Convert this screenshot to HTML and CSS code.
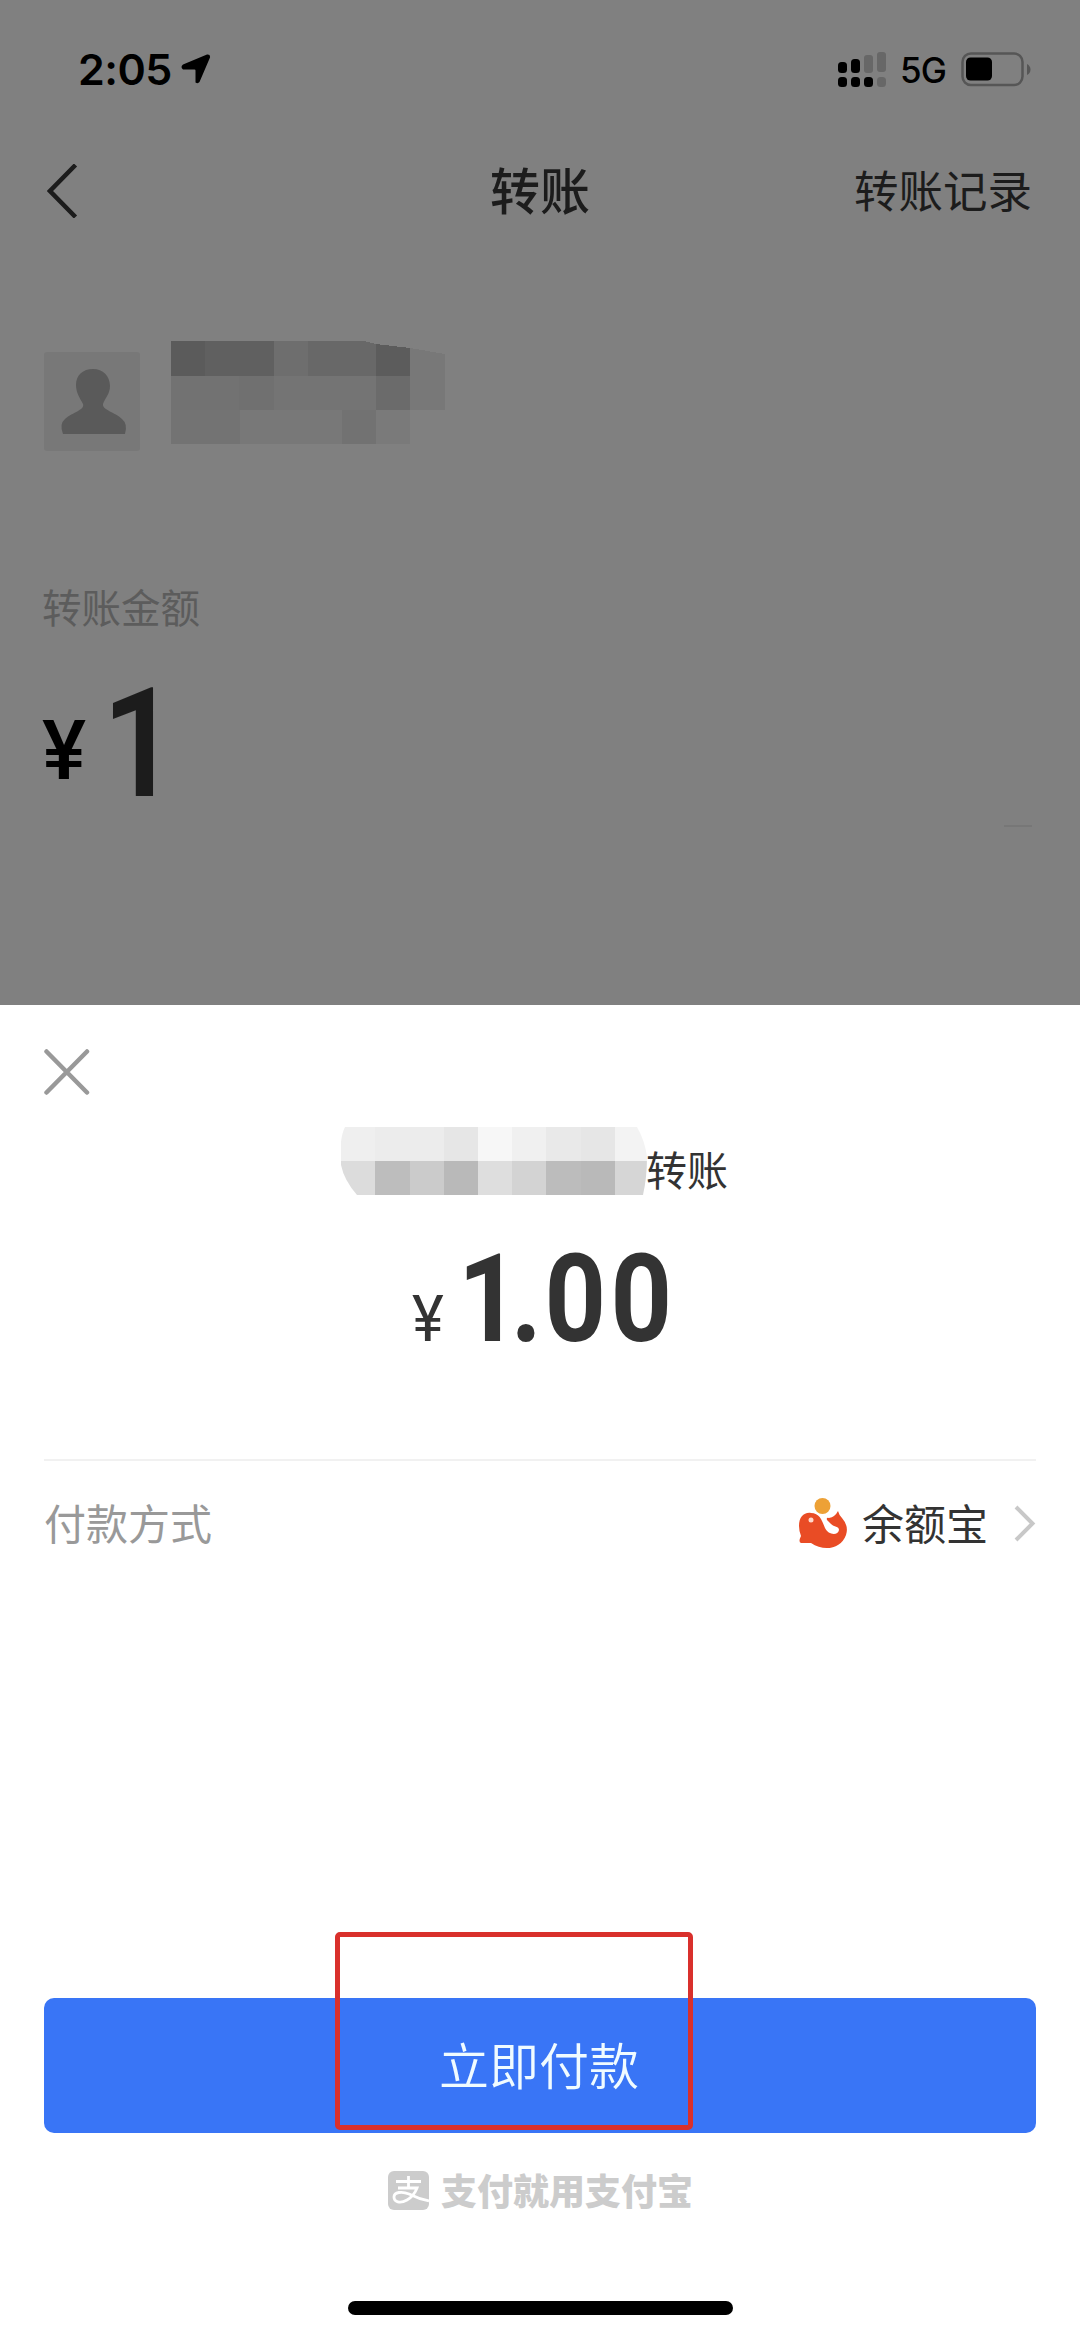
FILE: index.html
```html
<!DOCTYPE html>
<html lang="zh-CN">
<head>
<meta charset="utf-8">
<title>转账</title>
<link rel="stylesheet" href="styles.css">
</head>
<body>
<div class="screen">
  <section class="backdrop">
    <div class="status">
      <span class="time">2:05</span>
      <svg class="locate" width="30" height="30" viewBox="0 0 30 30"><path d="M2 10.500 26 .5Q29.500 0 29 3.500L18.500 28Q17 30 14.500 28.500V16.500Q14.500 15.500 13.500 15.500H2Q-1 13 2 10.500Z"/></svg>
      <svg class="signal" width="50" height="36" viewBox="0 0 50 36">
        <g><rect x="0" y="10" width="9" height="11" rx="3.500"/><rect x="13" y="7" width="9" height="14" rx="3.500"/><rect x="0" y="25" width="9" height="10" rx="3.500"/><rect x="13" y="25" width="9" height="10" rx="3.500"/><rect x="26" y="25" width="9" height="10" rx="3.500"/></g>
        <g fill="#676767"><rect x="26" y="3" width="9" height="18" rx="3"/><rect x="39" y="0" width="9" height="20" rx="3"/><rect x="39" y="25" width="9" height="10" rx="3.500"/></g>
      </svg>
      <span class="network">5G</span>
      <svg class="battery" width="70" height="35" viewBox="0 0 70 35"><rect x="1.500" y="1.500" width="60" height="31.500" rx="8.500" fill="none" stroke="#565656" stroke-width="2.500"/><rect x="5" y="5.500" width="26" height="23" rx="4.500"/><path d="M66 12Q69.500 14 69.500 17.500T66 23Z" fill="#565656"/></svg>
    </div>
    <nav class="nav">
      <svg width="31" height="54" viewBox="0 0 31 54"><path d="M28.500 1 3 27 28.500 53" fill="none" stroke="#1c1c1c" stroke-width="4.500"/></svg>
      <h1>转账</h1>
      <span class="records">转账记录</span>
    </nav>
    <div class="payee">
      <svg class="avatar" width="96" height="99" viewBox="0 0 96 99"><rect width="96" height="99" rx="3" fill="#787878"/><path d="M49 17C59 17 66 24 66 34 66 42 61 46 59 52 58 58 71 60 78 67Q84 72 81 82H19Q15 72 21 67C29 60 41 58 39 52 36 46 32 41 32 33 32 23 39 17 49 17Z" fill="#5a5a5a"/></svg>
      <svg class="mask" width="274" height="104" viewBox="0 0 274 104" shape-rendering="crispEdges">
        <path fill="#5b5b5b" d="M0 0H34V35H0Z"/><path fill="#606060" d="M34 0H103V35H34Z"/><path fill="#6e6e6e" d="M103 0H137V35H103Z"/><path fill="#686868" d="M137 0H193L205 3V35H137Z"/><path fill="#5c5c5c" d="M205 3 239 7V35H205Z"/><path fill="#787878" d="M239 7 274 13V69H239Z"/>
        <path fill="#727272" d="M0 35H68V69H0Z"/><path fill="#707070" d="M68 35H103V69H68Z"/><path fill="#747474" d="M103 35H205V69H103Z"/><path fill="#6b6b6b" d="M205 35H239V69H205Z"/>
        <path fill="#737373" d="M0 69H69V103H0Z"/><path fill="#787878" d="M69 69H171V103H69Z"/><path fill="#727272" d="M171 69H205V103H171Z"/><path fill="#7a7a7a" d="M205 69H239V103H205Z"/>
      </svg>
    </div>
    <p class="caption">转账金额</p>
    <div class="entry"><span class="entry-sign">¥</span><span class="entry-value">1</span></div>
    <i class="trace"></i>
  </section>

  <section class="sheet">
    <svg class="close" width="46" height="46" viewBox="0 0 46 46"><path d="M2.500 2.500 43 43.500M43 2.500 2.500 43.500" stroke="#999" stroke-width="4.500" stroke-linecap="round"/></svg>
    <div class="subject">
      <svg width="308" height="68" viewBox="0 0 308 68">
        <clipPath id="brush"><path d="M4 0H296Q304 14 306 30 306 50 302 68H16Q3 53 0 38V15Q1 6 4 0Z"/></clipPath>
        <g clip-path="url(#brush)" shape-rendering="crispEdges">
          <path fill="#efefef" d="M0 0H34V34H0Z"/><path fill="#ececec" d="M34 0H103V34H34Z"/><path fill="#e6e6e6" d="M103 0H137V34H103Z"/><path fill="#f7f7f7" d="M137 0H171V34H137Z"/><path fill="#f0f0f0" d="M171 0H205V34H171Z"/><path fill="#e9e9e9" d="M205 0H240V34H205Z"/><path fill="#e6e6e6" d="M240 0H274V34H240Z"/><path fill="#f3f3f3" d="M274 0H308V34H274Z"/>
          <path fill="#dcdcdc" d="M0 34H34V68H0Z"/><path fill="#bdbdbd" d="M34 34H69V68H34Z"/><path fill="#cbcbcb" d="M69 34H103V68H69Z"/><path fill="#b9b9b9" d="M103 34H137V68H103Z"/><path fill="#dedede" d="M137 34H171V68H137Z"/><path fill="#d3d3d3" d="M171 34H205V68H171Z"/><path fill="#bcbcbc" d="M205 34H240V68H205Z"/><path fill="#b9b9b9" d="M240 34H274V68H240Z"/><path fill="#d6d6d6" d="M274 34H308V68H274Z"/>
        </g>
      </svg>
      <span>转账</span>
    </div>
    <div class="total"><span class="total-sign">¥</span><span class="total-value"><span class="total-lead">1</span><span class="total-dot">.</span>00</span></div>
    <div class="method">
      <span class="method-label">付款方式</span>
      <svg class="fund" width="48" height="51" viewBox="0 0 48 51"><circle cx="23.500" cy="8" r="8" fill="#eda136"/><path d="M0 28C0 19 5 14 12 15 21 15 23 23 26 30 29 37 39 38 40 32 40 28 35 29 32 26L28 22Q27 19 30 20 36 19 39 13 40 17 43 20 50 28 47 37C42 51 25 54 12 45H2Q-1 44 2 38Q0 33 0 28Z" fill="#e94c25"/><circle cx="12" cy="22" r="2.500" fill="#ffd9cc"/></svg>
      <span class="method-name">余额宝</span>
      <svg class="more" width="22" height="37" viewBox="0 0 22 37"><path d="M2 2 18.500 18.500 2 35" fill="none" stroke="#c8c8c8" stroke-width="4"/></svg>
    </div>
    <div class="action">
      <button class="pay">立即付款</button>
      <i class="marker"></i>
    </div>
    <footer class="brand">
      <svg width="41" height="39" viewBox="0 0 41 39"><rect width="41" height="39" rx="6" fill="#ccc"/><g fill="none" stroke="#fff" stroke-width="2.800"><path d="M8 10.500H33M20.500 5V17M10 17H29Q26 25 19 29C12 33 6 31 6 26S14 20 21 23Q31 28 41 30"/></g></svg>
      <span>支付就用支付宝</span>
    </footer>
    <div class="home"></div>
  </section>
</div>
</body>
</html>
```
FILE: styles.css
```css
* { box-sizing: border-box; }
body { margin: 0; background: #fff; font-family: "Noto Sans CJK SC", sans-serif; }
svg { display: block; flex: none; }
h1, p { margin: 0; }
.screen { width: 1080px; height: 2337px; display: flex; flex-direction: column; overflow: hidden; }

.backdrop { position: relative; height: 1005px; background: #808080; color: #1c1c1c; flex: none; }
.status { display: flex; align-items: center; height: 138px; padding: 0 49px 0 78px; font-family: Inter, sans-serif; color: #000; }
.time { width: 103px; font-size: 43px; font-weight: 600; line-height: 50px; letter-spacing: -.5px; }
.signal { margin-left: auto; margin-top: 2px; }
.network { width: 61px; margin-left: 12px; margin-top: 2px; font-size: 35px; font-weight: 500; line-height: 40px; letter-spacing: -1px; }
.nav { display: grid; grid-template-columns: 1fr auto 1fr; align-items: center; height: 110px; padding: 0 48px 0 47px; margin-top: -2px; }
.nav svg { margin-bottom: 1px; }
.nav h1 { margin: 0 0 7px 1px; font-size: 50px; font-weight: 500; line-height: 60px; }
.records { justify-self: end; margin-bottom: 4px; font-size: 44.5px; line-height: 60px; }
.payee { display: flex; align-items: flex-start; margin: 95px 0 0 44px; height: 104px; }
.avatar { margin-top: 11px; }
.mask { margin-left: 31px; }
.caption { margin: 131px 0 0 42px; font-size: 39.5px; line-height: 60px; color: #5c5c5c; }
.entry { display: flex; align-items: baseline; margin: 18px 0 0 42px; font-family: Roboto, sans-serif; line-height: 180px; }
.entry-sign { width: 60px; font-size: 83px; font-weight: 500; color: #000; transform: translateY(-17px); }
.entry-value { font-size: 153px; font-weight: 600; transform: scaleX(.87); transform-origin: 0 50%; }
.trace { position: absolute; left: 1004px; top: 825px; width: 28px; height: 2px; background: #777; }

.sheet { flex: 1; display: flex; flex-direction: column; background: #fff; color: #333; }
.close { margin: 44px 0 0 44px; }
.subject { display: flex; margin: 32px 0 0 341px; height: 68px; }
.subject span { margin-left: -3px; font-size: 41px; line-height: 60px; margin-top: 11px; }
.subject svg { position: relative; z-index: 1; }
.total { display: flex; align-items: baseline; height: 264px; padding-left: 412px; padding-top: 35px; font-family: Roboto, sans-serif; line-height: 140px; }
.total-sign { width: 46px; font-size: 65px; font-weight: 400; transform: scaleX(.93); transform-origin: 0 50%; }
.total-value { font-size: 122px; font-weight: 700; letter-spacing: 5px; transform: scaleX(.88); transform-origin: 0 50%; }
.total-lead { letter-spacing: -10px; }
.total-dot { letter-spacing: 3px; }
.method { display: flex; align-items: center; height: 126px; margin: 0 44px; border-top: 2px solid #f1f1f1; }
.method-label, .method-name { margin-bottom: 3px; font-size: 42px; line-height: 60px; }
.method-label { color: #999; }
.fund { margin-left: auto; margin-right: 15px; }
.more { margin-left: 26px; }
.action { position: relative; margin: 413px 44px 0; }
.pay { display: block; width: 100%; height: 135px; border: 0; padding: 0 2px 4px 0; border-radius: 10px; background: #3975f6; color: #f0fbff; font: 350 50px/131px "Noto Sans CJK SC", sans-serif; }
.marker { position: absolute; left: 291px; top: -66px; width: 358px; height: 198px; border: 5px solid #d9302c; border-radius: 5px; }
.brand { display: flex; align-items: center; height: 60px; margin: 28px 0 0 388px; gap: 12px; color: #ccc; font-size: 36px; font-weight: 900; line-height: 60px; }
.brand svg { margin-bottom: 1px; }
.brand span { margin-bottom: 5px; }
.home { width: 385px; height: 14px; margin: 80px auto 0; border-radius: 7px; background: #000; }
```
